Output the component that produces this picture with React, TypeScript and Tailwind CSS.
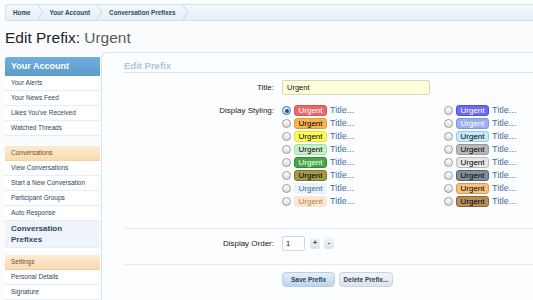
const crumbs = ["Home", "Your Account", "Conversation Prefixes"];

const leftStyles = [
  "bg-[#e96a6a] border-[#d65454] text-white",
  "bg-[#f7b452] border-[#e29a34] text-black",
  "bg-[#ffff55] border-[#e2e232] text-black",
  "bg-[#c8f0c8] border-[#a9dca9] text-black",
  "bg-[#47a747] border-[#2f8a2f] text-white",
  "bg-[#a29b48] border-[#7d7630] text-black",
  "bg-[#eaf3fc] border-[#eaf3fc] text-[#3d6ca0]",
  "bg-[#fbe6cf] border-[#fbe6cf] text-[#b3804c]",
];

const rightStyles = [
  "bg-[#6d6cf0] border-[#5252d8] text-white",
  "bg-[#9daff0] border-[#8396dc] text-white",
  "bg-[#c6e8f8] border-[#98cbe6] text-black",
  "bg-[#b8b8b8] border-[#999999] text-black",
  "bg-[#e6e6e6] border-[#bbbbbb] text-black",
  "bg-[#808d9b] border-[#556270] text-black",
  "bg-[#f6c27c] border-[#d89d4c] text-black",
  "bg-[#b68d5e] border-[#8a6438] text-black",
];

const sections = [
  { title: "Conversations", items: ["View Conversations", "Start a New Conversation", "Participant Groups", "Auto Response"] },
];

function Radio({ checked }: { checked?: boolean }) {
  return (
    <span
      className={
        "flex h-[9px] w-[9px] shrink-0 items-center justify-center rounded-full border " +
        (checked ? "border-[#3b6fb0] bg-[#dbe9f7]" : "border-[#9a9a9a] bg-linear-to-b from-white to-[#dcdcdc]")
      }
    >
      {checked && <span className="h-[4px] w-[4px] rounded-full bg-[#1f4f8f]" />}
    </span>
  );
}

function PrefixOption({ cls, checked }: { cls: string; checked?: boolean }) {
  return (
    <div className="flex h-[13px] items-center">
      <Radio checked={checked} />
      <span className={"ml-[3px] flex h-[11px] w-[33px] items-center justify-center rounded-[3px] border text-[8px] leading-none " + cls}>
        Urgent
      </span>
      <span className="ml-[3px] text-[9px] leading-none text-[#3f6d9f]">Title...</span>
    </div>
  );
}

function SideItem({ label }: { label: string }) {
  return (
    <div className="flex h-[15px] items-center border-b border-[#e6edf3] bg-white pl-[6px] text-[6.5px] text-[#2b485c]">
      {label}
    </div>
  );
}

function SideHeader({ label }: { label: string }) {
  return (
    <div className="flex h-[15px] items-center border-b border-[#f2d1a2] bg-linear-to-b from-[#fdebd2] to-[#f9dbb0] pl-[6px] text-[6.5px] text-[#6f5232]">
      {label}
    </div>
  );
}

export default function App() {
  return (
    <div className="relative h-[300px] w-[533px] overflow-hidden bg-[#fbfcfe] font-['Liberation_Sans',Arial,sans-serif]">
      {/* breadcrumb */}
      <div className="ml-[5px] mt-[4px] flex h-[17px] items-center rounded-l-[3px] border border-r-0 border-[#d3e1ec] bg-linear-to-b from-[#f3f8fc] to-[#e6eff7]">
        {crumbs.map((c, i) => (
          <div key={c} className="flex h-full items-center">
            <span className={"pr-[6px] text-[6.3px] font-bold text-[#2b485c] " + (i === 0 ? "pl-[7px]" : "pl-[6px]")}>{c}</span>
            <svg width="7" height="17" viewBox="0 0 7 17" className="shrink-0">
              <path d="M0 0 L6 8.5 L0 17" fill="none" stroke="#c8d8e6" strokeWidth="1" />
            </svg>
          </div>
        ))}
      </div>

      {/* title */}
      <h1 className="ml-[5px] mt-[5px] h-[26px] text-[15.5px] leading-[24px] text-[#222]">
        Edit Prefix: <span className="text-[#5a5a5a]">Urgent</span>
      </h1>

      <div className="flex">
        {/* sidebar */}
        <div className="ml-[5px] w-[95px] shrink-0 pt-[5px]">
          <div className="flex h-[19px] items-center rounded-tl-[3px] bg-linear-to-b from-[#71aedb] to-[#5d9bcb] pl-[6px] text-[9px] font-bold text-white">
            Your Account
          </div>
          {["Your Alerts", "Your News Feed", "Likes You've Received", "Watched Threads"].map((i) => (
            <SideItem key={i} label={i} />
          ))}
          <div className="h-[10px]" />
          {sections.map((s) => (
            <div key={s.title}>
              <SideHeader label={s.title} />
              {s.items.map((i) => (
                <SideItem key={i} label={i} />
              ))}
            </div>
          ))}
          <div className="flex h-[27px] flex-col justify-center border-b border-[#e6edf3] bg-[#eef4fa] pl-[6px] text-[8px] font-bold leading-[11px] text-[#2b485c]">
            <span>Conversation</span>
            <span>Prefixes</span>
          </div>
          <div className="h-[7px]" />
          <SideHeader label="Settings" />
          <SideItem label="Personal Details" />
          <SideItem label="Signature" />
        </div>

        {/* main panel */}
        <div className="ml-[1px] h-[250px] flex-1 rounded-tl-[6px] border-l border-t border-[#d6e4ee] bg-[#fcfdfe] pl-[21px]">
          <div className="flex h-[20px] items-end border-b border-[#dbe8f0] pb-[2px] pl-[1px] text-[9.5px] font-bold leading-none text-[#a9c6de]">
            Edit Prefix
          </div>

          <div className="mt-[7px] flex items-center gap-[8px]">
            <label className="w-[151px] text-right text-[8px] text-[#222]">Title:</label>
            <div className="flex h-[15px] w-[148px] items-center rounded-[2px] border border-[#d6d6c0] bg-[#ffffd9] pl-[4px] text-[7.5px] text-[#111]">
              Urgent
            </div>
          </div>

          <div className="mt-[9px] flex items-start gap-[8px]">
            <label className="w-[151px] text-right text-[8px] leading-[13px] text-[#222]">Display Styling:</label>
            <div className="grid grid-cols-[161px_auto]">
              <div className="flex flex-col">
                {leftStyles.map((c, i) => (
                  <PrefixOption key={c} cls={c} checked={i === 0} />
                ))}
              </div>
              <div className="flex flex-col pl-[1px]">
                {rightStyles.map((c) => (
                  <PrefixOption key={c} cls={c} />
                ))}
              </div>
            </div>
          </div>

          <div className="mt-[20px] border-t border-[#e3edf3]" />

          <div className="mt-[7px] flex items-center gap-[8px]">
            <label className="w-[151px] text-right text-[8px] text-[#222]">Display Order:</label>
            <div className="flex items-center">
              <div className="flex h-[15px] w-[23px] items-center rounded-[2px] border border-[#cfd8e0] bg-white pl-[3px] text-[7.5px] text-[#111]">
                1
              </div>
              <button className="ml-[5px] flex h-[11px] w-[10px] items-center justify-center rounded-[3px] bg-linear-to-b from-[#f1f5f9] to-[#d9e2ea] text-[7px] font-bold text-[#2b485c]">
                +
              </button>
              <button className="ml-[4px] flex h-[11px] w-[10px] items-center justify-center rounded-[3px] bg-linear-to-b from-[#f1f5f9] to-[#d9e2ea] text-[7px] font-bold text-[#2b485c]">
                -
              </button>
            </div>
          </div>

          <div className="mt-[13px] border-t border-[#e3edf3]" />

          <div className="mt-[7px] flex items-center gap-[4px] pl-[159px]">
            <button className="flex h-[15px] w-[53px] items-center justify-center rounded-[4px] border border-[#b9cfe0] bg-linear-to-b from-[#e4eff8] to-[#bcd5e9] text-[6.5px] font-bold text-[#2b485c]">
              Save Prefix
            </button>
            <button className="flex h-[15px] w-[54px] items-center justify-center rounded-[4px] border border-[#cdd3da] bg-linear-to-b from-[#f3f5f7] to-[#dde2e7] text-[6.5px] font-bold text-[#2b485c]">
              Delete Prefix...
            </button>
          </div>
        </div>
      </div>
    </div>
  );
}
